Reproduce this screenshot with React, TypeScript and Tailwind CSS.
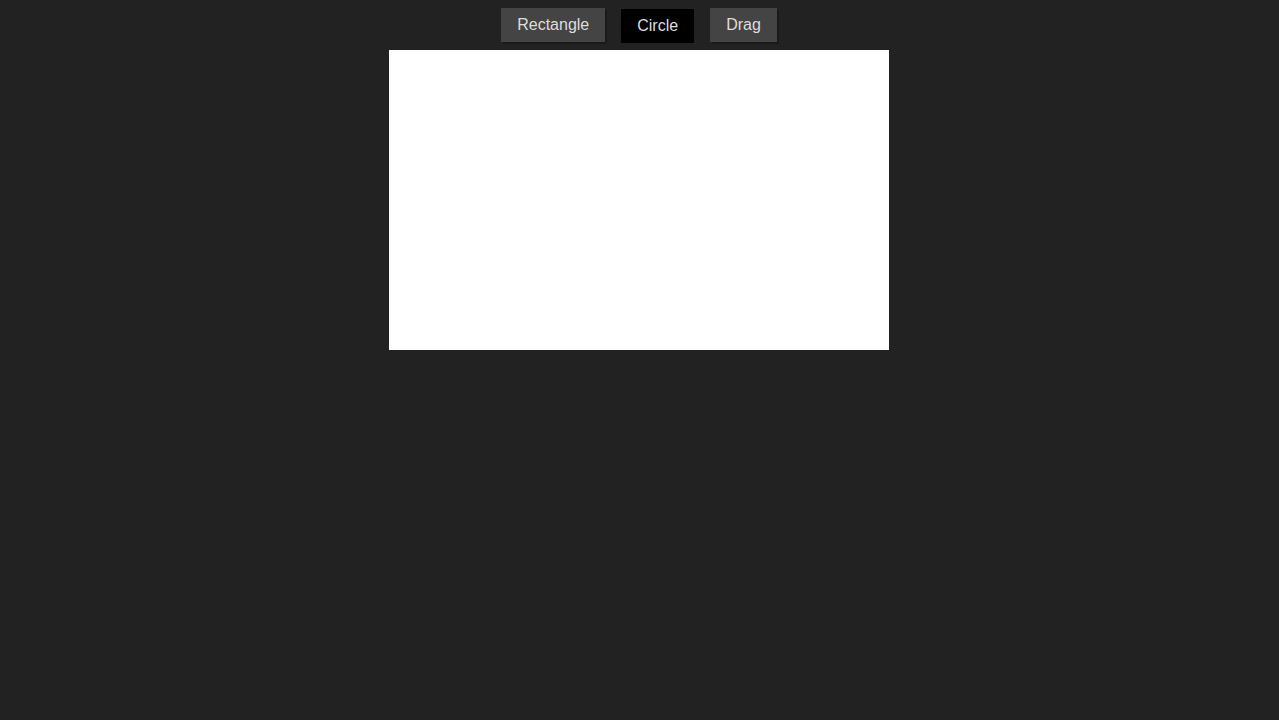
import React from "react";

export default function App() {
  const btn =
    "h-[34px] px-4 text-base leading-none text-[#dddddd] bg-[#444444] shadow-[2px_2px_0_0_#1a1a1a]";
  return (
    <div
      className="min-h-[720px] w-full bg-[#222222] flex flex-col items-center pt-2 pr-px"
      style={{ fontFamily: '"Liberation Sans", Arial, sans-serif' }}
    >
      <div className="flex gap-4 items-start">
        <button className={btn}>Rectangle</button>
        <button className="h-[34px] px-4 text-base leading-none text-[#dddddd] bg-black translate-y-px">
          Circle
        </button>
        <button className={btn}>Drag</button>
      </div>
      <div className="mt-2 w-[500px] h-[300px] bg-white" />
    </div>
  );
}
